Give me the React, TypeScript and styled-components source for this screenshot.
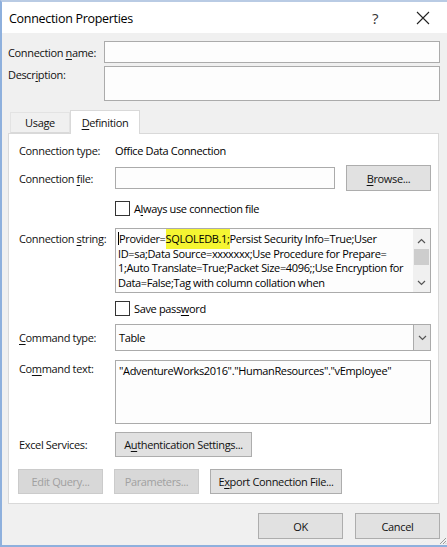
import React from "react";
import styled, { createGlobalStyle } from "styled-components";

const Global = createGlobalStyle`
  html, body { margin: 0; padding: 0; background: #f0f0f0; }
  body { font-family: "Open Sans", "Noto Sans", "Liberation Sans", sans-serif; font-size: 11px; letter-spacing: -0.35px; color: #000; }
  * { box-sizing: border-box; }
`;

const Window = styled.div`
  position: relative;
  width: 447px;
  height: 547px;
  background: #f0f0f0;
  border-top: 2px solid #b9cbe4;
  border-left: 2px solid #8eb0dd;
  border-bottom: 2px solid #8eb0dd;
  display: flex;
  flex-direction: column;
  overflow: hidden;
`;

const TitleBar = styled.div`
  height: 31px;
  background: #ffffff;
  display: flex;
  align-items: center;
  padding-left: 7px;
  font-size: 12.5px;
  letter-spacing: -0.3px;
  color: #000;
`;

const TitleText = styled.div`
  flex: 1;
  padding-top: 2px;
`;

const TitleButton = styled.div`
  width: 48px;
  display: flex;
  align-items: center;
  justify-content: center;
  font-size: 15px;
  color: #333;
`;

const Body = styled.div`
  flex: 1;
  display: flex;
  flex-direction: column;
  padding: 8px 7px 0 6px;
`;

const Row = styled.div<{ $top?: number; $align?: string }>`
  display: flex;
  align-items: ${(p) => p.$align || "center"};
  margin-top: ${(p) => p.$top ?? 0}px;
`;

const Label = styled.div<{ $w: number; $pt?: number }>`
  width: ${(p) => p.$w}px;
  flex: none;
  padding-top: ${(p) => p.$pt ?? 0}px;
  color: #111;
  white-space: nowrap;
`;

const TextBox = styled.div<{ $h: number; $w?: number }>`
  height: ${(p) => p.$h}px;
  ${(p) => (p.$w ? `width: ${p.$w}px; flex: none;` : "flex: 1;")}
  background: #fdfdfd;
  border: 1px solid #ababab;
  padding: 2px 3px;
  position: relative;
`;

const Tabs = styled.div`
  display: flex;
  align-items: flex-end;
  margin-top: 9px;
  height: 23px;
  padding-left: 2px;
  position: relative;
  z-index: 1;
`;

const Tab = styled.div<{ $active?: boolean; $w: number }>`
  width: ${(p) => p.$w}px;
  height: ${(p) => (p.$active ? 24 : 21)}px;
  margin-bottom: ${(p) => (p.$active ? -1 : 0)}px;
  display: flex;
  align-items: center;
  justify-content: center;
  background: ${(p) => (p.$active ? "#ffffff" : "#f0f0f0")};
  border: 1px solid ${(p) => (p.$active ? "#d9d9d9" : "#e3e3e3")};
  border-bottom: ${(p) => (p.$active ? "none" : "1px solid #d9d9d9")};
  color: #111;
`;

const Panel = styled.div`
  width: 431px;
  height: 371px;
  background: #ffffff;
  border: 1px solid #d9d9d9;
  padding: 9px 7px 0 10px;
  display: flex;
  flex-direction: column;
`;

const Button = styled.div<{ $w: number; $h?: number; $disabled?: boolean }>`
  width: ${(p) => p.$w}px;
  height: ${(p) => p.$h ?? 25}px;
  flex: none;
  display: flex;
  align-items: center;
  justify-content: center;
  background: ${(p) => (p.$disabled ? "#d8d8d8" : "#e1e1e1")};
  border: 1px solid ${(p) => (p.$disabled ? "#cbcbcb" : "#adadad")};
  color: ${(p) => (p.$disabled ? "#a0a0a0" : "#111")};
`;

const CheckBox = styled.div`
  width: 15px;
  height: 15px;
  border: 1px solid #333;
  background: #fff;
  margin-right: 4px;
  flex: none;
`;

const Indent = styled.div`
  width: 96px;
  flex: none;
`;

const StringBox = styled.div`
  flex: 1;
  height: 65px;
  border: 1px solid #ababab;
  background: #fdfdfd;
  display: flex;
`;

const StringText = styled.div`
  flex: 1;
  padding: 3px 0 0 2px;
  line-height: 14.5px;
  font-size: 11px;
  white-space: nowrap;
  overflow: hidden;
`;

const Caret = styled.span`
  display: inline-block;
  width: 1px;
  height: 13px;
  background: #000;
  vertical-align: -2px;
`;

const Highlight = styled.span`
  background: #f5f532;
  padding: 2px 0 3px;
`;

const ScrollBar = styled.div`
  width: 17px;
  flex: none;
  background: #f0f0f0;
  display: flex;
  flex-direction: column;
  align-items: center;
  padding: 9px 0 0;
`;

const Thumb = styled.div`
  width: 15px;
  height: 16px;
  background: #cdcdcd;
  margin-top: 5px;
  margin-bottom: 15px;
`;

const Select = styled.div`
  flex: 1;
  height: 27px;
  border: 1px solid #ababab;
  background: #fdfdfd;
  display: flex;
  align-items: stretch;
`;

const SelectValue = styled.div`
  flex: 1;
  display: flex;
  align-items: center;
  padding-left: 3px;
`;

const SelectArrow = styled.div`
  width: 17px;
  background: #e5e5e5;
  border-left: 1px solid #ababab;
  display: flex;
  align-items: center;
  justify-content: center;
`;

const ButtonRow = styled.div<{ $top: number; $gap: number }>`
  display: flex;
  gap: ${(p) => p.$gap}px;
  margin-top: ${(p) => p.$top}px;
  margin-left: -1px;
`;

const Footer = styled.div`
  display: flex;
  justify-content: flex-end;
  gap: 12px;
  padding: 9px 0 0;
`;

const Grip = styled.svg`
  position: absolute;
  right: 0;
  bottom: 0;
`;

const Spacer = styled.div`
  flex: 1;
`;

const U = styled.span`
  text-decoration: underline;
  text-underline-offset: 2px;
`;

const Chevron = ({ up }: { up?: boolean }) => (
  <svg width="9" height="6" viewBox="0 0 9 6">
    <path
      d={up ? "M1 5 L4.5 1.5 L8 5" : "M1 1 L4.5 4.5 L8 1"}
      fill="none"
      stroke="#555"
      strokeWidth="1.2"
    />
  </svg>
);

export default function App() {
  return (
    <>
      <Global />
      <Window>
        <TitleBar>
          <TitleText>Connection Properties</TitleText>
          <TitleButton>?</TitleButton>
          <TitleButton>
            <svg width="14" height="14" viewBox="0 0 14 14">
              <path d="M1 1 L13 13 M13 1 L1 13" stroke="#222" strokeWidth="1.1" />
            </svg>
          </TitleButton>
        </TitleBar>
        <Body>
          <Row>
            <Label $w={96}>
              Connection <U>n</U>ame:
            </Label>
            <TextBox $h={22} />
          </Row>
          <Row $top={3} $align="flex-start">
            <Label $w={96} $pt={1}>
              Descr<U>i</U>ption:
            </Label>
            <TextBox $h={35} />
          </Row>
          <Tabs>
            <Tab $w={60}>Usage</Tab>
            <Tab $w={70} $active>
              <U>D</U>efinition
            </Tab>
          </Tabs>
          <Panel>
            <Row $top={0}>
              <Label $w={96}>Connection type:</Label>
              <div>Office Data Connection</div>
            </Row>
            <Row $top={7}>
              <Label $w={96}>
                Connection <U>f</U>ile:
              </Label>
              <TextBox $h={22} $w={220} />
              <Spacer />
              <Button $w={85} $h={26}>
                <U>B</U>rowse...
              </Button>
            </Row>
            <Row $top={10}>
              <Indent />
              <CheckBox />
              <div>
                A<U>l</U>ways use connection file
              </div>
            </Row>
            <Row $top={12} $align="flex-start">
              <Label $w={96} $pt={3}>
                Connection <U>s</U>tring:
              </Label>
              <StringBox>
                <StringText>
                  <Caret />
                  Provider=<Highlight>SQLOLEDB.1;</Highlight>Persist Security Info=True;User
                  <br />
                  ID=sa;Data Source=xxxxxxx;Use Procedure for Prepare=
                  <br />
                  1;Auto Translate=True;Packet Size=4096;;Use Encryption for
                  <br />
                  Data=False;Tag with column collation when
                </StringText>
                <ScrollBar>
                  <Chevron up />
                  <Thumb />
                  <Chevron />
                </ScrollBar>
              </StringBox>
            </Row>
            <Row $top={8}>
              <Indent />
              <CheckBox />
              <div>
                Save pass<U>w</U>ord
              </div>
            </Row>
            <Row $top={8}>
              <Label $w={96}>
                <U>C</U>ommand type:
              </Label>
              <Select>
                <SelectValue>Table</SelectValue>
                <SelectArrow>
                  <Chevron />
                </SelectArrow>
              </Select>
            </Row>
            <Row $top={9} $align="flex-start">
              <Label $w={96} $pt={1}>
                Co<U>m</U>mand text:
              </Label>
              <TextBox $h={64}>
                "AdventureWorks2016"."HumanResources"."vEmployee"
              </TextBox>
            </Row>
            <Row $top={8}>
              <Label $w={96}>Excel Services:</Label>
              <Button $w={137}>
                A<U>u</U>thentication Settings...
              </Button>
            </Row>
            <ButtonRow $top={12} $gap={11}>
              <Button $w={85} $disabled>
                Edit Query...
              </Button>
              <Button $w={85} $disabled>
                Parameters...
              </Button>
              <Button $w={132}>
                E<U>x</U>port Connection File...
              </Button>
            </ButtonRow>
          </Panel>
          <Footer>
            <Button $w={85} $h={26}>
              OK
            </Button>
            <Button $w={85} $h={26}>
              Cancel
            </Button>
          </Footer>
        </Body>
        <Grip width="8" height="8" viewBox="0 0 8 8">
          <path d="M7 1 L1 7 M7 4 L4 7 M7 6.5 L6.5 7" stroke="#999" strokeWidth="1" />
        </Grip>
      </Window>
    </>
  );
}
